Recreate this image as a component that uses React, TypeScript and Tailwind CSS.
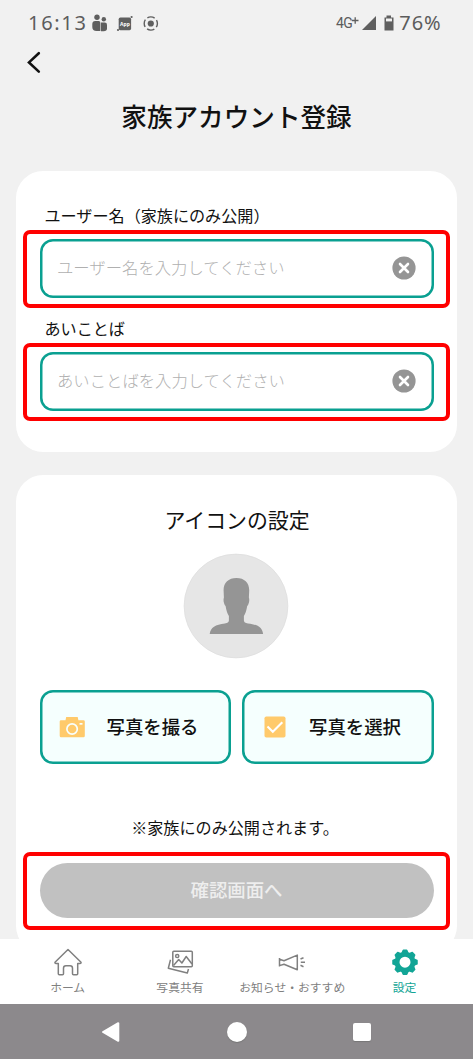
import type { ReactNode } from "react"

function StatusBar() {
  return (
    <div className="flex h-[46px] shrink-0 items-center pl-[28px] pr-[31.5px] font-['Noto_Sans',sans-serif] text-[#5c5c5c]">
      <span className="w-[64px] text-[20px] leading-none tracking-[1.7px]">16:13</span>
      <svg className="h-[18px] w-[68px]" viewBox="92 15 68 18" fill="#5f5f5f">
        <circle cx="97" cy="18.3" r="2.7" />
        <path d="M92.3 25q0-3 3-3h3.4q1.700 0 1.700 2v8h-3.900q-4.100 0-4.200-4z" />
        <circle cx="103.8" cy="20.2" r="2.2" />
        <path d="M101 23.4h3.700q2.300 0 2.300 2.400v3.700q0 2.700-3.400 2.700H101z" />
        <rect x="118.700" y="18.600" width="12.400" height="12.600" rx="1.600" />
        <circle cx="131.6" cy="18" r="1.100" />
        <circle cx="118" cy="31" r="1.100" />
        <text x="125" y="26.9" fontSize="5" fontWeight="700" textAnchor="middle" fill="#fff">
          App
        </text>
        <circle cx="150.8" cy="24.5" r="3.1" />
        <circle
          cx="150.8"
          cy="24.5"
          r="6.6"
          fill="none"
          stroke="#5f5f5f"
          strokeWidth="1.4"
          strokeDasharray="7.67 2.7"
          strokeDashoffset="3.8"
        />
      </svg>
      <div className="ml-auto flex items-center">
        <span className="mr-[-1.5px] font-[Roboto,sans-serif] text-[14px] leading-none tracking-[-0.6px]">4G</span>
        <svg className="mr-[2.5px] h-[18px] w-[46px]" viewBox="351 15 46 18" fill="#5f5f5f">
          <path d="M351.9 21.5h6.6M355.2 18.2v6.600" stroke="#5f5f5f" strokeWidth="1.3" />
          <path d="M376 17v14h-14z" />
          <path d="M384.5 18.500h2v-2h4.500v2h2.500v13h-9z" />
          <path d="M386 19.500h6v2.900h-6z" fill="#f1f1f1" />
        </svg>
        <span className="text-[20px] leading-none tracking-[0.9px]">76%</span>
      </div>
    </div>
  )
}

// Marco rojo que resalta un campo o botón
function Highlight({ children, className = "" }: { children: ReactNode; className?: string }) {
  return <div className={`rounded-[7px] border-4 border-[#ff0000] px-[12.5px] ${className}`}>{children}</div>
}

interface FieldProps {
  label: string
  placeholder: string
}

function Field({ label, placeholder }: FieldProps) {
  return (
    <div className="mb-[11px]">
      <div className="flex h-6 items-start pl-[21.5px] text-[16.1px] leading-[19px]">{label}</div>
      <Highlight className="h-[78px] pt-[5px]">
        <div className="flex h-[58.5px] items-center justify-between rounded-[13px] px-[17.5px] shadow-[inset_0_0_0_2.5px_#0aa091]">
          <span className="mt-[-2px] text-[16.35px] font-light text-[#b0b0b0]">{placeholder}</span>
          <svg className="h-6 w-6" viewBox="0 0 24 24">
            <circle cx="12" cy="12" r="11.6" fill="#959595" />
            <path d="M8 8l8 8M16 8l-8 8" stroke="#fff" strokeWidth="2.6" strokeLinecap="round" />
          </svg>
        </div>
      </Highlight>
    </div>
  )
}

function PhotoButton({ icon, text }: { icon: ReactNode; text: string }) {
  return (
    <button className="flex h-[74px] w-[191.5px] items-center rounded-[13px] bg-[#f5fffe] pl-[19px] shadow-[inset_0_0_0_2.5px_#0aa091]">
      <span className="w-[48px]">{icon}</span>
      <span className="text-[18.4px] font-medium">{text}</span>
    </button>
  )
}

function NavItem({ icon, label, active }: { icon: ReactNode; label: string; active?: boolean }) {
  return (
    <div className={`flex w-[112.3px] flex-col items-center pt-[7px] ${active ? "text-[#12a596]" : "text-[#808080]"}`}>
      <svg className="h-8 w-8" viewBox="0 0 32 32" fill="none" stroke="currentColor" strokeWidth="1.5" strokeLinejoin="round">
        {icon}
      </svg>
      <span className="whitespace-nowrap text-[11.8px] leading-[18px]">{label}</span>
    </div>
  )
}

const gearTeeth = [0, 45, 90, 135, 180, 225, 270, 315]

export default function App() {
  return (
    <div className="flex h-[1059px] w-[473px] flex-col overflow-hidden bg-[#f1f1f1] font-['Noto_Sans_CJK_JP',sans-serif] text-[#111]">
      <StatusBar />

      <main className="flex min-h-0 flex-1 flex-col overflow-hidden">
        <svg className="ml-[26px] mt-[4px] h-6 w-4 shrink-0" viewBox="26 50 16 24">
          <path d="M38.8 53.2L29 62.4l9.8 9.2" fill="none" stroke="#111" strokeWidth="2.6" strokeLinecap="round" />
        </svg>
        <h1 className="mt-[22px] mb-px flex h-10 shrink-0 items-center justify-center text-[25.6px] font-medium">
          家族アカウント登録
        </h1>

        <section className="ml-[16px] mt-[33.5px] h-[281.5px] w-[441px] shrink-0 rounded-[27px] bg-white pl-[7px] pr-[7px] pt-[35.5px]">
          <Field label="ユーザー名（家族にのみ公開）" placeholder="ユーザー名を入力してください" />
          <Field label="あいことば" placeholder="あいことばを入力してください" />
        </section>

        <section className="ml-[16px] mt-[23px] flex h-[478px] w-[441px] shrink-0 flex-col rounded-[27px] bg-white px-[7px] pt-[30px]">
          <h2 className="flex h-[30px] items-center justify-center pl-px text-[20.9px]">アイコンの設定</h2>
          <svg className="mr-px mt-[18px] h-[106px] w-[106px] self-center" viewBox="183.3 553 106 106">
            <circle cx="236.3" cy="606" r="51.9" fill="#e6e6e6" stroke="#dcdcdc" strokeWidth="0.7" />
            <path
              d="M236.8 578c8 0 12.900 5 12.700 12.500l-.3 7c.9 2.500.1 6.500-1.700 8.600-.7 4.500-1.700 7.400-3.300 9.900v4.500c0 1.700 1.400 2.400 4 2.900 9.500 1.300 14.300 3.600 15.200 10.600H210c.9-7 5.700-9.300 15.200-10.600 2.600-.5 4.000-1.200 4.000-2.900V616c-1.600-2.500-2.600-5.400-3.300-9.900-1.800-2.100-2.600-6.100-1.700-8.600l-.3-7c-.2-7.500 4.700-12.500 12.900-12.500z"
              fill="#959595"
            />
          </svg>
          <div className="mt-[31px] flex justify-between px-[16.5px]">
            <PhotoButton
              text="写真を撮る"
              icon={
                <svg className="h-[22px] w-[26px]" viewBox="58.5 716 26 22">
                  <path
                    d="M60.500 720.300H65l.7-3.300h11.500l.7 3.300h5.100q1.300 0 1.300 1.300v14.200q0 1.500-1.300 1.500H60.500q-1.300 0-1.300-1.500v-14.200q0-1.300 1.300-1.300z"
                    fill="#ffca6b"
                  />
                  <circle cx="71.600" cy="729" r="5.200" fill="none" stroke="#f8fffe" strokeWidth="1.700" />
                  <path d="M79 723h3v1.700h-3z" fill="#f8fffe" />
                </svg>
              }
            />
            <PhotoButton
              text="写真を選択"
              icon={
                <svg className="ml-[3px] h-[22px] w-[22px]" viewBox="0 0 22 22">
                  <rect x="0.500" y="0.500" width="21" height="21" rx="1.800" fill="#ffca6b" />
                  <path d="M3.500 10.500l5.300 5.300L18.300 6.300" fill="none" stroke="#fff" strokeWidth="2.100" />
                </svg>
              }
            />
          </div>
          <p className="mt-[51px] mb-[0.5px] flex h-6 items-center justify-center pr-[3px] text-[16.1px]">
            ※家族にのみ公開されます。
          </p>
          <Highlight className="mt-[12px] h-[78px] shrink-0 pt-[7px]">
            <button className="flex h-[55.500px] w-full items-center justify-center rounded-full bg-[#c1c1c1] text-[18.400px] font-medium text-[#eee]">
              確認画面へ
            </button>
          </Highlight>
        </section>
      </main>

      <nav className="flex h-[65px] shrink-0 bg-white pl-[11.5px]">
        <NavItem
          label="ホーム"
          icon={
            <path d="M16 3.500L3 16.200q-.4 1.200 1 1.200h2.300v10.400q0 1 1 1h3.200q1 0 1-1v-5.600q0-2.400 2.400-2.400h4.200q2.400 0 2.400 2.400v5.600q0 1 1 1h3.200q1 0 1-1V17.400H28q1.400 0 1-1.200L16 3.500z" />
          }
        />
        <NavItem
          label="写真共有"
          icon={
            <>
              <rect x="8.800" y="5.300" width="19.500" height="15.400" rx="1" />
              <circle cx="13.200" cy="10" r="1.600" />
              <path d="M9.500 19.500l5.200-6 3.200 3.500 4.300-6.500 5.800 7.500M6.500 13.800L4.300 22.300l19 4.700 1.200-4" />
            </>
          }
        />
        <NavItem
          label="お知らせ・おすすめ"
          icon={
            <>
              <path d="M3.500 12v8.500M3.500 13.300l4.500 1.400 13.300-5.600v14.600L8 18.200l-4.500 1.400" />
              <path d="M24.500 13l3-1.300M24.800 16.200H29M24.500 19.300l3 1.400" />
            </>
          }
        />
        <NavItem
          active
          label="設定"
          icon={
            <>
              <circle cx="16" cy="16.200" r="8" strokeWidth="5" />
              {gearTeeth.map((angle) => (
                <path
                  key={angle}
                  d="M13.300 6.500l1-2.300h3.400l1 2.300z"
                  fill="currentColor"
                  transform={`rotate(${angle} 16 16.200)`}
                />
              ))}
            </>
          }
        />
      </nav>

      <div className="flex h-[55px] shrink-0 items-center bg-[#8c898c] pl-[101px]">
        <svg className="h-[22px] w-[20px]" viewBox="0 0 20 22" fill="#fff" stroke="#fff" strokeWidth="2" strokeLinejoin="round">
          <path d="M2 11L17.300 2.200v17.600z" />
        </svg>
        <div className="ml-[105.500px] h-[20px] w-[20px] rounded-full bg-white shadow-[0_1px_1px_#777]" />
        <div className="ml-[106px] h-[18px] w-[18px] rounded-[2px] bg-white shadow-[0_1px_1px_#777]" />
      </div>
    </div>
  )
}
